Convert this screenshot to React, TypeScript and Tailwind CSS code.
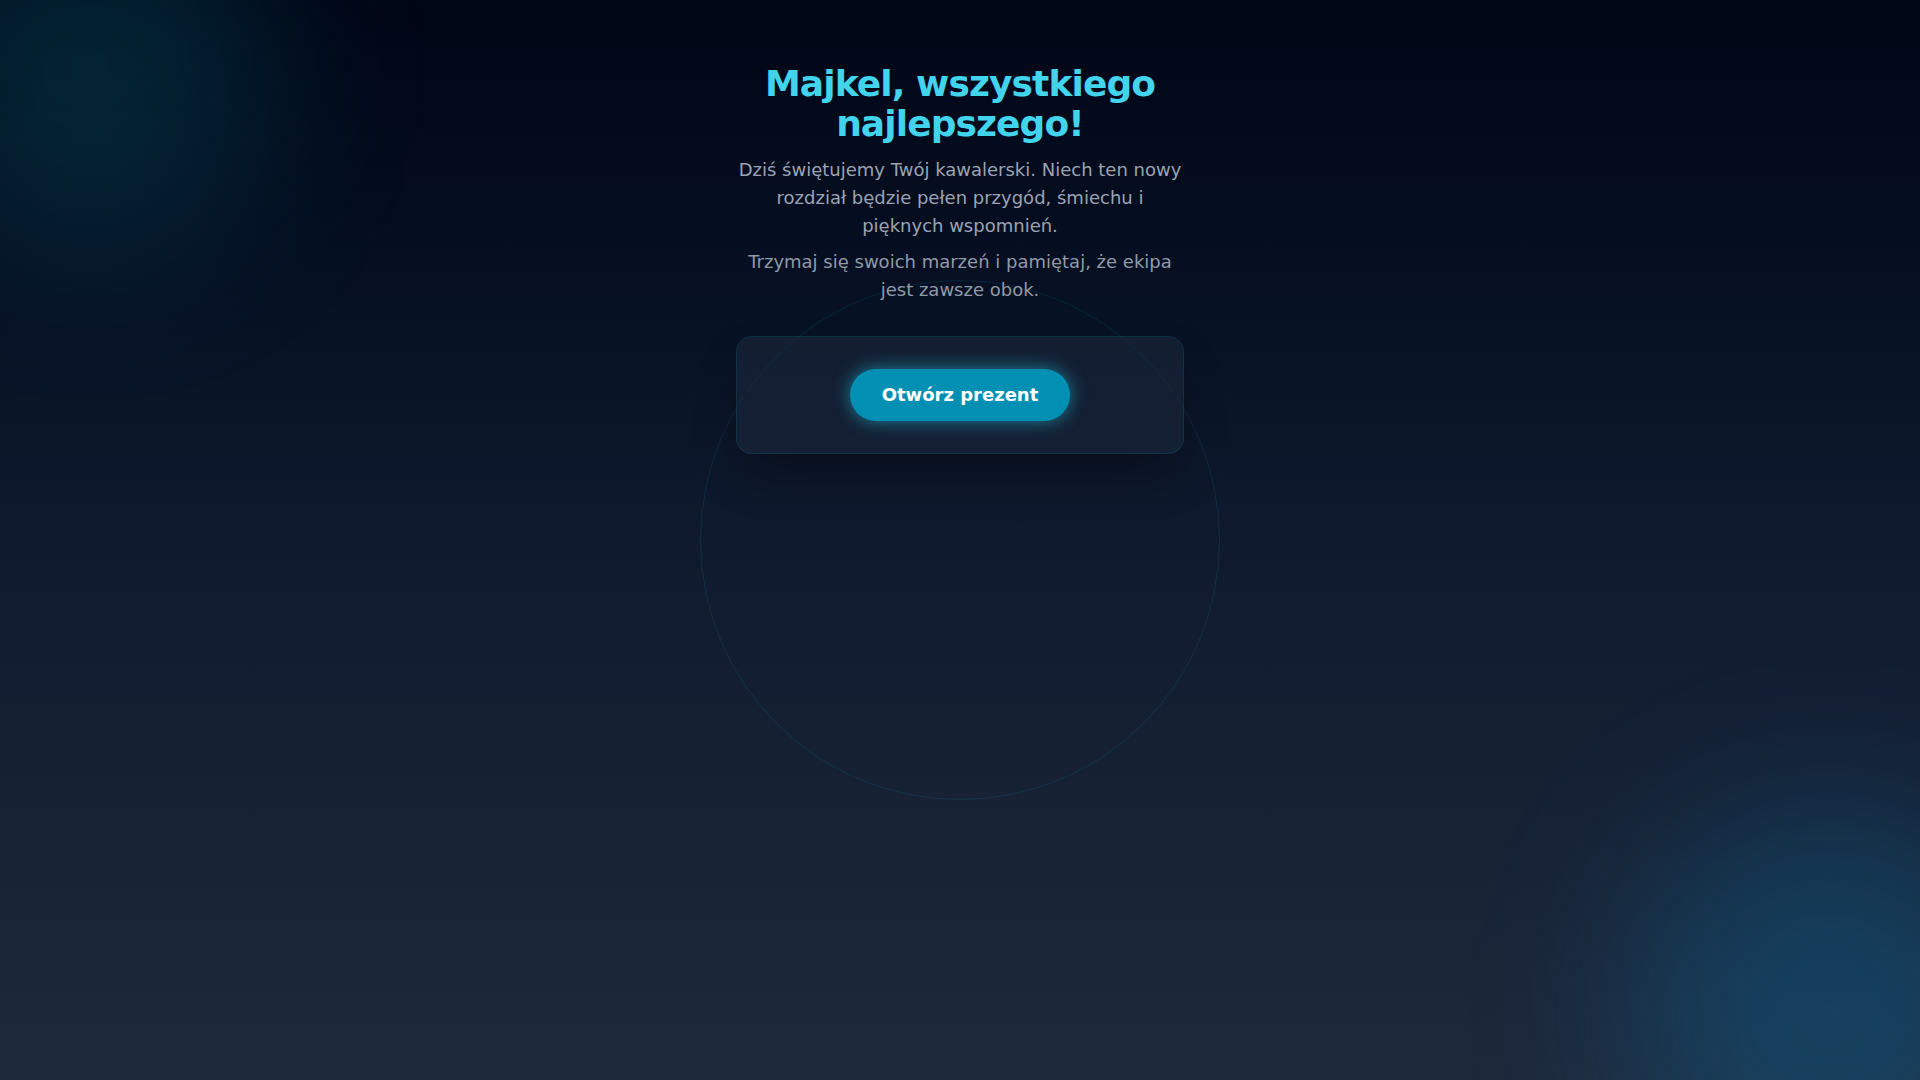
export default function App() {
  return (
    <div
      className="relative min-h-screen w-full overflow-hidden bg-gradient-to-b from-[#010616] via-[#0f1a2e] to-[#1e293b] text-white"
      style={{ fontFamily: '"DejaVu Sans", sans-serif' }}
    >
      {/* glows */}
      <div className="pointer-events-none absolute -left-[90px] -top-[110px] h-[360px] w-[360px] rounded-full bg-[#0bb5c8]/[0.16] blur-[80px]" />
      <div className="pointer-events-none absolute -bottom-[130px] -right-[110px] h-[400px] w-[400px] rounded-full bg-sky-500/20 blur-[80px]" />

      {/* ring */}
      <div className="pointer-events-none absolute left-1/2 top-1/2 h-[520px] w-[520px] -translate-x-1/2 -translate-y-1/2 rounded-full border border-cyan-400/10" />

      <main className="relative flex flex-col items-center px-4 pt-16">
        <div className="w-full max-w-md text-center">
          <h1 className="text-4xl font-bold tracking-tight text-[#41d4ec]">Majkel, wszystkiego najlepszego!</h1>
          <p className="mt-3 text-lg text-[#9ba3b3]">
            Dziś świętujemy Twój kawalerski. Niech ten nowy rozdział będzie pełen przygód, śmiechu i pięknych wspomnień.
          </p>
          <p className="mt-2 text-lg text-[#9099a8]">
            Trzymaj się swoich marzeń i pamiętaj, że ekipa jest zawsze obok.
          </p>

          <div className="mt-8 flex justify-center rounded-2xl border border-cyan-400/10 bg-slate-800/50 p-8 shadow-2xl shadow-black/40">
            <button className="rounded-full bg-[#028fb4] px-8 py-3 text-lg font-bold text-white shadow-[0_0_18px_rgba(34,211,238,0.55)]">
              Otwórz prezent
            </button>
          </div>
        </div>
      </main>
    </div>
  )
}
